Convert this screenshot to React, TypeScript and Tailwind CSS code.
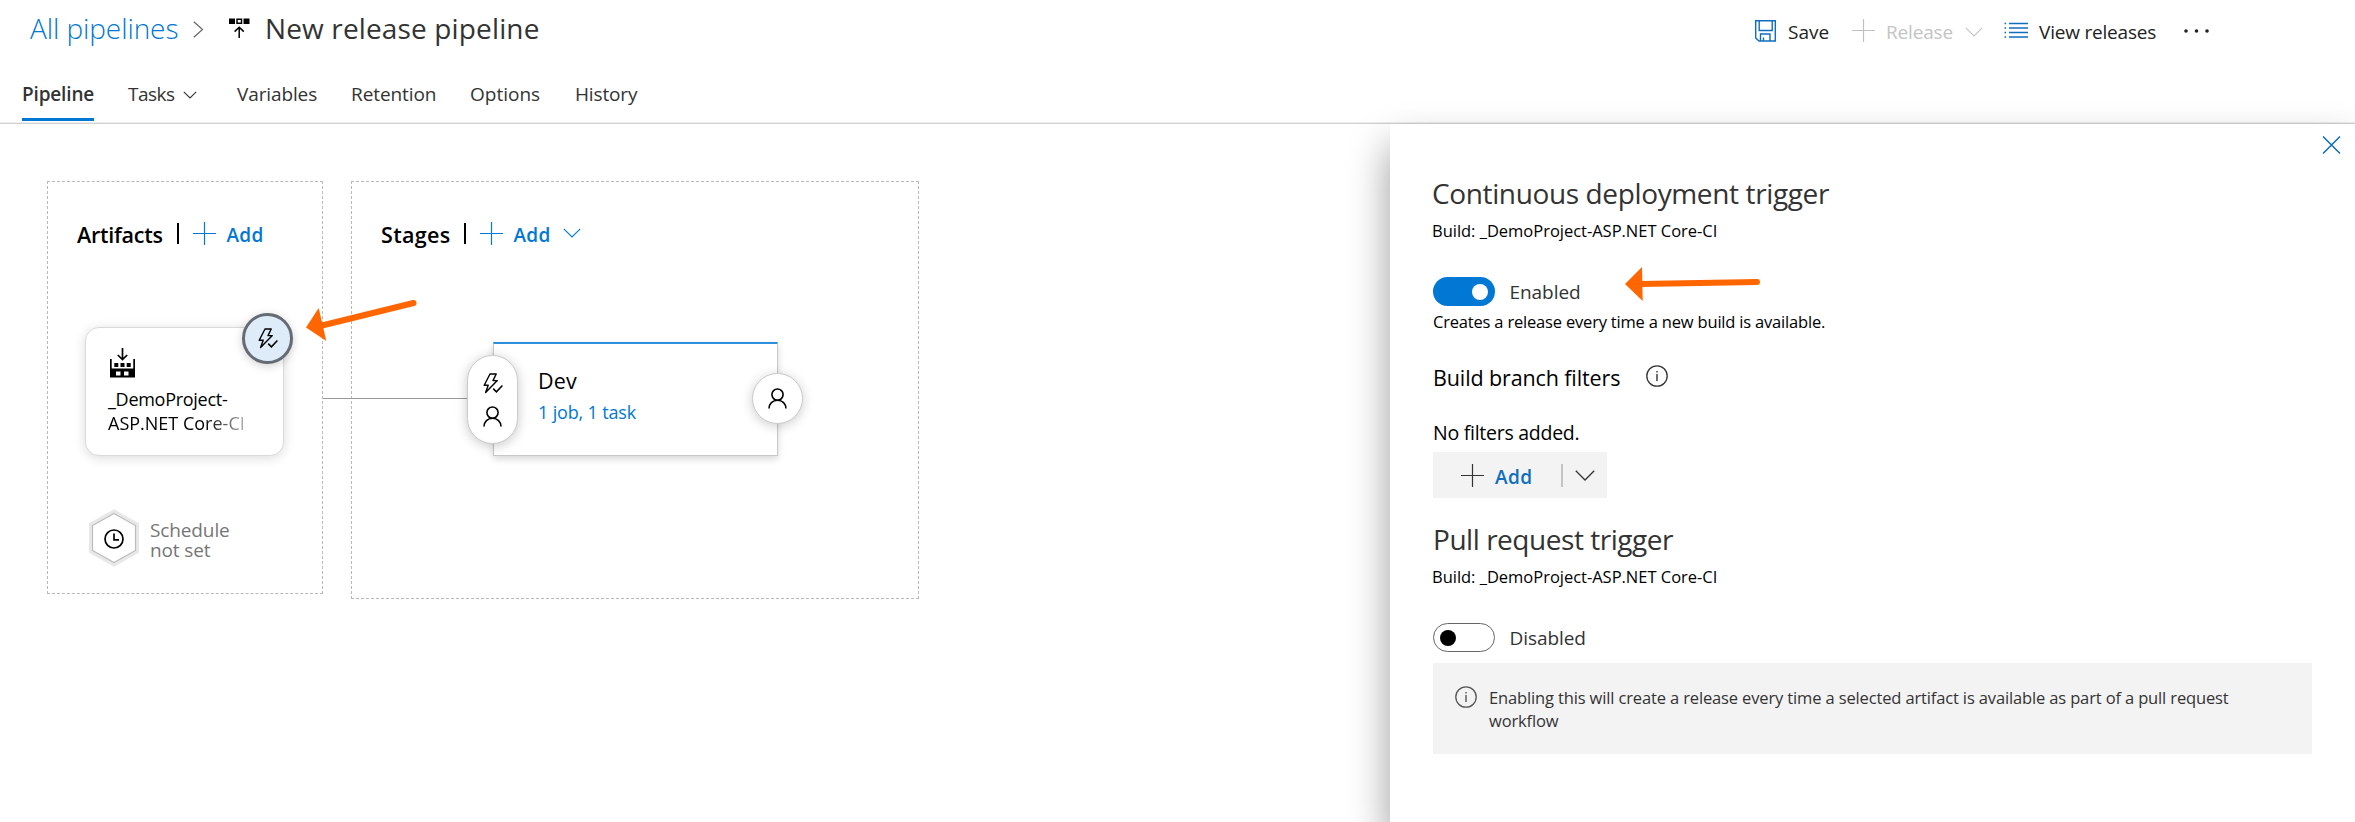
import type { ReactNode } from 'react';

type IconProps = { className?: string };

function Svg({ w, h, className = '', children }: { w: number; h: number; className?: string; children: ReactNode }) {
  return (
    <svg width={w} height={h} viewBox={`0 0 ${w} ${h}`} fill="none" stroke="currentColor" className={`block shrink-0 ${className}`}>
      {children}
    </svg>
  );
}

function Plus({ className }: IconProps) {
  return (
    <Svg w={23} h={23} className={className}>
      <path d="M11.5 0v23M0 11.5h23" strokeWidth="1.2" />
    </Svg>
  );
}

function ChevronDown({ className }: IconProps) {
  return (
    <Svg w={18} h={10} className={className}>
      <path d="M0.8 0.8 9 9l8.2-8.2" strokeWidth="1.1" />
    </Svg>
  );
}

function Bolt({ className }: IconProps) {
  return (
    <Svg w={20} h={21} className={className}>
      <path d="M7 1h6.200L10 7.600h4.300L2.600 19.600l2.600-7.400H1.200z" strokeWidth="1.400" strokeLinejoin="round" />
      <path d="m10.200 15.600 3.200 3.200 6-6.400" strokeWidth="1.500" />
    </Svg>
  );
}

function Person({ className }: IconProps) {
  return (
    <Svg w={19} h={21} className={className}>
      <circle cx="9.5" cy="6.6" r="5.6" strokeWidth="1.6" />
      <path d="M1 20.600c0-4.800 3.600-8.400 8.500-8.400s8.500 3.600 8.500 8.400" strokeWidth="1.6" />
    </Svg>
  );
}

function Info({ className }: IconProps) {
  return (
    <Svg w={22} h={22} className={className}>
      <circle cx="11" cy="11" r="10.2" strokeWidth="1.3" />
      <path d="M11 9v7M11 6v1.500" strokeWidth="1.4" />
    </Svg>
  );
}

function Header() {
  return (
    <header className="h-[124px] border-b border-[#d2d2d2] shadow-[inset_0_-1px_0_#ededed]">
      <div className="flex h-[82px] items-start pl-[30px] pt-2">
        <a className="w-[163px] text-[28px] font-light leading-10 tracking-[-0.08px] text-[#0078d4]">All pipelines</a>
        <Svg w={11} h={17} className="mt-[12.500px] text-[#666]">
          <path d="m0.800 0.800 8.700 7.700-8.700 7.700" strokeWidth="1.200" />
        </Svg>
        <Svg w={21} h={21} className="ml-[25px] mt-[9.500px] text-black">
          <path d="M0 0.500h6v5.500H0zM14.500 0.500h6v5.500h-6z" fill="currentColor" stroke="none" />
          <path d="M8 1.200h4.500v4H8z" strokeWidth="1.500" />
          <path d="M10.200 20V9.500M5.600 13.600l4.600-4.400 4.600 4.400" strokeWidth="1.500" />
        </Svg>
        <h1 className="ml-[15px] w-[276px] text-[28px] leading-10 tracking-[0.14px] text-[#333]">New release pipeline</h1>
        <div className="ml-[1214px] flex items-start pt-[11px] text-[19px] leading-6 text-[#222]">
          <Svg w={21} h={22} className="mt-px text-[#106ebe]">
            <path d="M0.700 0.700h19.600v20.300H4L0.700 18z" strokeWidth="1.400" />
            <path d="M4.200 0.700v9.800h13V0.700M5.500 21v-7h9.500v7M8.500 21v-3.500" strokeWidth="1.400" />
          </Svg>
          <span className="ml-[12px] w-[64px] pt-px">Save</span>
          <Plus className="text-[#c0c0c0]" />
          <span className="ml-[11px] w-[79px] pt-px tracking-[-0.16px] text-[#c4c4c4]">Release</span>
          <ChevronDown className="mt-2 text-[#c4c4c4]" />
          <Svg w={24} h={17} className="ml-[21px] mt-[3px] text-[#106ebe]">
            <path d="M5 1.500h19M5 6h19M5 10.500h19M5 15h19" strokeWidth="1.400" />
            <path d="M0.500 1.500h1.600M0.500 6h1.600M0.500 10.500h1.600M0.500 15h1.600" strokeWidth="1.600" />
          </Svg>
          <span className="ml-[11px] w-[145px] pt-px tracking-[-0.20px]">View releases</span>
          <Svg w={26} h={4} className="mt-[10px] text-[#222]">
            <g fill="currentColor" stroke="none">
              <circle cx="2" cy="2" r="1.800" />
              <circle cx="12.500" cy="2" r="1.800" />
              <circle cx="23" cy="2" r="1.800" />
            </g>
          </Svg>
        </div>
      </div>
      <nav className="flex items-start pl-[22px] text-[19px] leading-6 text-[#333]">
        <a className="h-[39px] w-[72px] border-b-[3px] border-[#0078d4] font-semibold tracking-[-0.16px]">Pipeline</a>
        <a className="ml-[34px] flex w-[109px] gap-1">
          <span className="w-[51px] tracking-[-0.5px]">Tasks</span>
          <Svg w={14} h={8} className="mt-[8.500px]">
            <path d="m0.800 0.800 6.200 6.200 6.200-6.200" strokeWidth="1.100" />
          </Svg>
        </a>
        <a className="w-[114px] tracking-[-0.12px]">Variables</a>
        <a className="w-[119px] tracking-[-0.08px]">Retention</a>
        <a className="w-[105px]">Options</a>
        <a className="tracking-[-0.14px]">History</a>
      </nav>
    </header>
  );
}

function Artifacts() {
  return (
    <section className="relative h-[413px] w-[276px] border border-dashed border-[#b8b8b8]">
      <div className="flex items-start pl-[29px] pt-[40px]">
        <h2 className="w-[100px] pt-px text-[21.5px] font-semibold leading-6 tracking-[-0.24px] text-black">Artifacts</h2>
        <span className="mt-[1px] h-[21px] w-[1.5px] bg-black" />
        <Plus className="ml-[14px] text-[#0078d4]" />
        <span className="ml-[11px] pt-px text-[19px] font-semibold leading-6 tracking-[0.3px] text-[#0078d4]">Add</span>
      </div>
      <div className="absolute left-[37px] top-[145px] h-[129px] w-[199px] rounded-[14px] border-[1.5px] border-[#dadada] bg-white pl-[22px] pt-[20px] text-black shadow-[0_2px_12px_rgba(0,0,0,0.14)]">
        <Svg w={25} h={30} className="ml-[2px]">
          <path d="M12.500 0v11M7.800 7l4.700 4.600L17.200 7" strokeWidth="1.700" />
          <path fillRule="evenodd" fill="currentColor" stroke="none" d="M0 11h1.700v9.500h21.600V11H25v18.500H0zM6 23.500v4h4.500v-4zM14 23.500v4h4.500v-4z" />
          <path d="M4.300 15h4v4h-4zM10.500 15h4v4h-4zM16.700 15h4v4h-4z" fill="currentColor" stroke="none" />
        </Svg>
        <p className="mt-[9px] w-[160px] text-[18px] leading-6 tracking-[-0.28px]">
          _DemoProject-
          <br />
          <span className="inline-block tracking-normal [mask-image:linear-gradient(to_right,#000_70%,rgba(0,0,0,0.3)_100%)]">ASP.NET Core-CI</span>
        </p>
      </div>
      <div className="absolute left-[194px] top-[131px] flex size-[51px] items-center justify-center rounded-full border-[3px] border-[#646b73] bg-[#deecf9] text-black shadow-[0_2px_10px_rgba(0,0,0,0.18)]">
        <Bolt />
      </div>
      <div className="absolute left-[40px] top-[327px] flex items-start">
        <Svg w={52} h={58} className="text-black">
          <path d="M26 2.500 49 15.500v27L26 55.500 3 42.500v-27z" stroke="#e8e8e8" strokeWidth="4" fill="#fff" />
          <path d="M26 4.500 47.500 16.500v25L26 53.500 4.500 41.500v-25z" stroke="#bdbdbd" strokeWidth="1.200" />
          <circle cx="26" cy="30" r="9" strokeWidth="1.700" />
          <path d="M26 24.500v6.300h5" strokeWidth="1.700" />
        </Svg>
        <p className="ml-[10px] mt-[11px] text-[19px] leading-5 tracking-[-0.12px] text-[#767676]">
          Schedule
          <br />
          not set
        </p>
      </div>
    </section>
  );
}

function Stages() {
  return (
    <section className="relative ml-[28px] h-[418px] w-[568px] border border-dashed border-[#b8b8b8]">
      <div className="flex items-start pl-[29px] pt-[40px]">
        <h2 className="w-[83px] pt-px text-[21.5px] font-semibold leading-6 tracking-[0.34px] text-black">Stages</h2>
        <span className="mt-[1px] h-[21px] w-[1.5px] bg-black" />
        <Plus className="ml-[14px] text-[#0078d4]" />
        <span className="ml-[11px] w-[49px] pt-px text-[19px] font-semibold leading-6 tracking-[0.3px] text-[#0078d4]">Add</span>
        <ChevronDown className="mt-[6px] text-[#0078d4]" />
      </div>
      <div className="absolute left-[-29px] top-[216px] h-px w-[145px] bg-[#999]" />
      <div className="absolute left-[141px] top-[160px] h-[114px] w-[285px] border-[1.5px] border-t-2 border-[#c8c8c8] border-t-[#2b8fdb] bg-white pl-[44px] pt-[25px] shadow-[0_3px_7px_rgba(0,0,0,0.16)]">
        <h3 className="text-[21.5px] leading-6 tracking-[0.16px] text-black">Dev</h3>
        <a className="mt-[7px] block text-[18px] leading-6 tracking-[-0.16px] text-[#0078d4]">1 job, 1 task</a>
      </div>
      <div className="absolute left-[115px] top-[173px] flex h-[89px] w-[51px] flex-col items-center gap-3 rounded-full border-[1.5px] border-[#cacaca] bg-white pt-[17px] text-black shadow-[0_2px_12px_rgba(0,0,0,0.22)]">
        <Bolt />
        <Person />
      </div>
      <div className="absolute left-[400px] top-[191px] flex size-[51px] items-center justify-center rounded-full border-[1.5px] border-[#cacaca] bg-white text-black shadow-[0_2px_12px_rgba(0,0,0,0.2)]">
        <Person />
      </div>
      <svg width="116" height="46" viewBox="0 0 116 46" className="absolute left-[-50px] top-[117px] text-[#ff6600]">
        <path d="M18 27 111.500 4" stroke="currentColor" strokeWidth="6" strokeLinecap="round" />
        <path d="M4 28.500 16.700 9 24.300 42z" fill="currentColor" />
      </svg>
    </section>
  );
}

function Toggle({ on, label }: { on?: boolean; label: string }) {
  return (
    <div className="flex h-[29px] items-center gap-[14.5px]">
      <span
        className={
          on
            ? 'flex h-[29px] w-[62px] items-center justify-end rounded-full bg-[#0078d4] pr-[7px]'
            : 'flex h-[29px] w-[62px] items-center rounded-full border-[1.5px] border-[#666] pl-[6px]'
        }
      >
        <span className={on ? 'size-4 rounded-full bg-white' : 'size-4 rounded-full bg-black'} />
      </span>
      <span className="text-[19px] leading-6 tracking-[-0.06px] text-[#333]">{label}</span>
    </div>
  );
}

function TriggerPanel() {
  return (
    <aside className="relative h-[698px] w-[965px] bg-white pl-[43px] pt-[49px] shadow-[0_22px_38px_rgba(0,0,0,0.4)]">
      <Svg w={19} h={18} className="absolute right-[14px] top-[12px] text-[#106ebe]">
        <path d="m1 0.500 17 17M18 0.500l-17 17" strokeWidth="1.500" />
      </Svg>
      <h2 className="-ml-px text-[28px] leading-10 tracking-[-0.37px] text-[#333]">Continuous deployment trigger</h2>
      <p className="-ml-px mt-[6px] text-[16.5px] leading-6 tracking-[-0.02px] text-black">Build: _DemoProject-ASP.NET Core-CI</p>
      <div className="mt-[34px]">
        <Toggle on label="Enabled" />
      </div>
      <p className="mt-[4px] text-[16.5px] leading-6 tracking-[-0.19px] text-black">Creates a release every time a new build is available.</p>
      <div className="mt-[31px] flex items-start text-black">
        <h3 className="w-[213px] pt-px text-[21.5px] leading-6 tracking-[-0.12px]">Build branch filters</h3>
        <Info className="text-[#333]" />
      </div>
      <p className="mt-[31px] text-[19.5px] leading-6 tracking-[-0.26px] text-black">No filters added.</p>
      <div className="mt-[7px] flex h-[46px] w-[174px] items-center bg-[#f3f3f3] pl-[28px] text-[#333]">
        <Plus />
        <span className="ml-[11px] w-[66px] pt-[3px] text-[19px] font-semibold leading-6 tracking-[0.4px] text-[#106ebe]">Add</span>
        <span className="h-[23px] w-[2px] bg-[#c4c4c4]" />
        <Svg w={20} h={11} className="ml-[11.500px]">
          <path d="M0.800 0.800 10 10l9.200-9.200" strokeWidth="1.300" />
        </Svg>
      </div>
      <h2 className="mt-[21px] text-[28px] leading-10 tracking-[-0.46px] text-[#333]">Pull request trigger</h2>
      <p className="-ml-px mt-[6px] text-[16.5px] leading-6 tracking-[-0.02px] text-black">Build: _DemoProject-ASP.NET Core-CI</p>
      <div className="mt-[34px]">
        <Toggle label="Disabled" />
      </div>
      <div className="mt-[11px] flex h-[91px] w-[879px] items-start bg-[#f3f3f3] pl-[22px] pt-[23px]">
        <Info className="text-[#555]" />
        <p className="ml-[12px] w-[760px] text-[16.5px] leading-[23px] tracking-[-0.14px] text-[#333]">
          Enabling this will create a release every time a selected artifact is available as part of a pull request workflow
        </p>
      </div>
      <svg width="142" height="42" viewBox="0 0 142 42" className="absolute left-[231px] top-[139px] text-[#ff6600]">
        <path d="M20 21 136 19" stroke="currentColor" strokeWidth="6" strokeLinecap="round" />
        <path d="M4 21 21 4 21.700 38z" fill="currentColor" />
      </svg>
    </aside>
  );
}

export default function App() {
  return (
    <div className="h-[822px] w-[2355px] overflow-hidden bg-white font-['Open_Sans','Noto_Sans',sans-serif]">
      <Header />
      <main className="flex items-start justify-between">
        <div className="flex items-start pl-[47px] pt-[57px]">
          <Artifacts />
          <Stages />
        </div>
        <TriggerPanel />
      </main>
    </div>
  );
}
